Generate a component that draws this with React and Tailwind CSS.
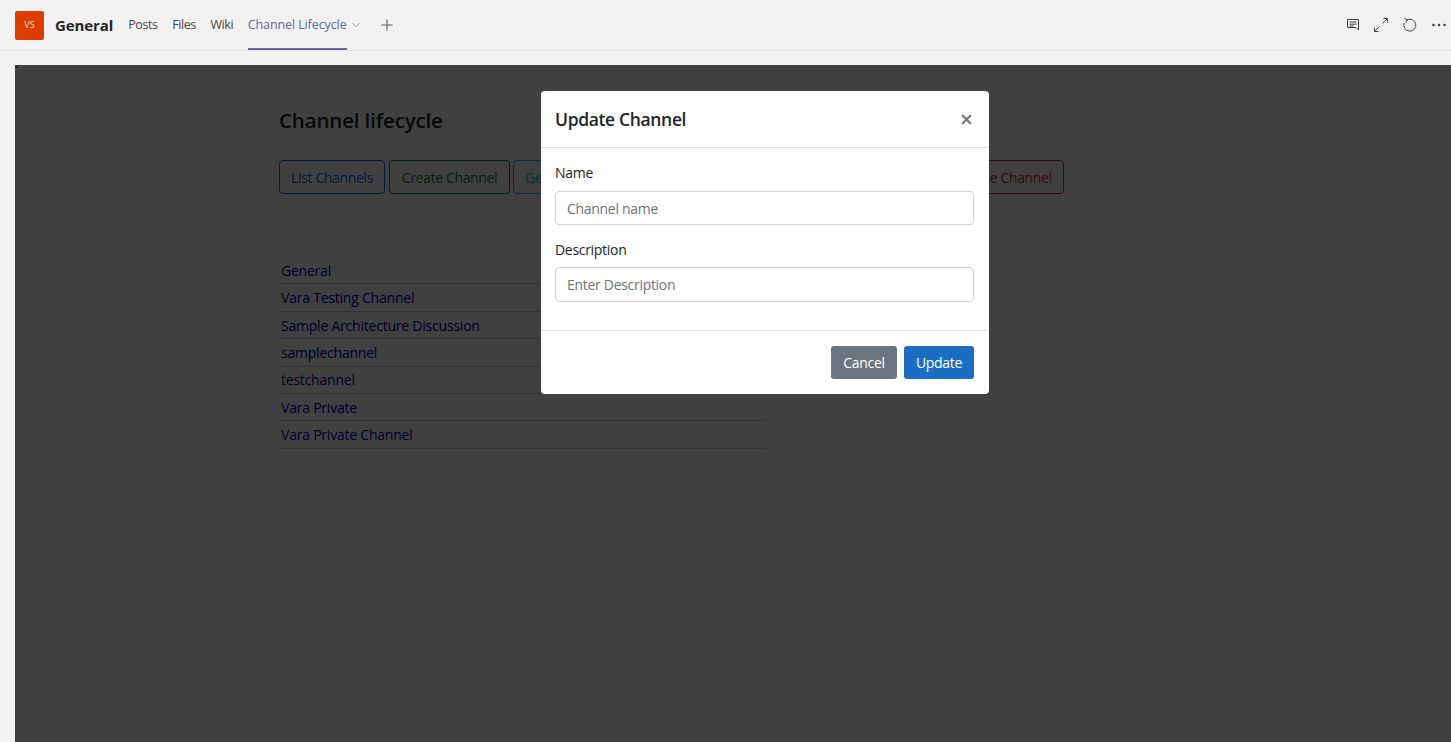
import { Plus, ChevronDown, X } from 'lucide-react'

const channels = [
  'General',
  'Vara Testing Channel',
  'Sample Architecture Discussion',
  'samplechannel',
  'testchannel',
  'Vara Private',
  'Vara Private Channel',
]

function TopIcons() {
  return (
    <div className="flex items-center gap-[11px] text-[#484644]">
      <svg width="18" height="18" viewBox="0 0 18 18" fill="none" stroke="currentColor" strokeWidth="1" className="ml-[1px]">
        <path d="M3.5 3.5h11v10.5l-2.5-2.5H3.5z" />
        <path d="M5.5 6h7M5.5 8.2h7M5.5 10h4" />
      </svg>
      <svg width="18" height="18" viewBox="0 0 18 18" fill="none" stroke="currentColor" strokeWidth="1" className="-ml-[1px]">
        <path d="M10.5 7.5l5-5M11.5 2.5h4v4M7.5 10.5l-5 5M2.5 11.5v4h4" />
      </svg>
      <svg width="18" height="18" viewBox="0 0 18 18" fill="none" stroke="currentColor" strokeWidth="1">
        <path d="M6 3.8A6 6 0 1 1 3.2 7" />
        <path d="M3.5 2.5l2.8 1.4-1.4 2.8" />
      </svg>
      <svg width="18" height="18" viewBox="0 0 18 18" fill="currentColor">
        <circle cx="3.5" cy="9" r="1.3" />
        <circle cx="9" cy="9" r="1.3" />
        <circle cx="14.5" cy="9" r="1.3" />
      </svg>
    </div>
  )
}

function OutlineButton({ color, children }) {
  return (
    <button className={`h-[34px] shrink-0 rounded-[4px] border px-[11px] text-[14px] ${color}`}>
      {children}
    </button>
  )
}

export default function App() {
  return (
    <div className="flex h-screen w-full flex-col overflow-hidden bg-[#f3f2f1] font-['Open_Sans',sans-serif] text-[#252423]">
      <header className="flex h-[51px] shrink-0 items-center border-b border-[#e6e4e2] pl-[15px] pr-[3px]">
        <div className="flex h-[29px] w-[29px] items-center justify-center rounded-[2px] bg-[#dc3e00] text-[9px] text-[#f8d8c8]">
          VS
        </div>
        <h1 className="ml-[11px] text-[15px] font-bold tracking-[-0.1px]">General</h1>
        <nav className="ml-[15px] flex h-full items-center gap-[14.5px] text-[12.5px] tracking-[-0.4px] text-[#484644]">
          <span>Posts</span>
          <span>Files</span>
          <span>Wiki</span>
          <span className="relative flex h-full items-center font-medium tracking-[-0.1px] text-[#6264a7]">
            Channel Lifecycle
            <span className="absolute bottom-0 left-0 right-0 h-[2px] bg-[#6264a7]" />
          </span>
        </nav>
        <ChevronDown size={14} strokeWidth={1} className="ml-[2px] text-[#7a7876]" />
        <Plus size={18} strokeWidth={1.4} className="ml-[15px] text-[#605e5c]" />
        <div className="ml-auto">
          <TopIcons />
        </div>
      </header>

      <main className="flex-1 pl-[15px] pt-[14px]">
        <div className="relative h-full bg-white">
          <div className="pl-[264px] pt-[39px] text-[#212529]">
            <h2 className="text-[20.5px] font-semibold leading-[32px] tracking-[-0.15px]">Channel lifecycle</h2>
            <div className="mt-[24px] flex gap-[4px] tracking-[-0.35px]">
              <OutlineButton color="border-[#0d6efd] text-[#0d6efd]">List Channels</OutlineButton>
              <OutlineButton color="w-[121px] border-[#198754] text-[#198754]">Create Channel</OutlineButton>
              <OutlineButton color="-ml-[1px] w-[428px] border-[#0dcaf0] text-left text-[#0dcaf0]">Get Channel</OutlineButton>
              <OutlineButton color="border-[#dc3545] text-[#dc3545]">Delete Channel</OutlineButton>
            </div>
            <table className="mt-[62.6px] w-[487px] text-[14px] tracking-[-0.22px]">
              <tbody>
                {channels.map(name => (
                  <tr key={name} className="h-[27.4px] border-b border-[#c8ccd0]">
                    <td className="px-[2px] align-middle text-[#0000c8]">{name}</td>
                  </tr>
                ))}
              </tbody>
            </table>
          </div>

          <div className="absolute inset-0 bg-black/[.75]">
            <span className="absolute left-0 top-0 text-[10px] leading-[12px] text-black">`</span>
          </div>

          <div className="absolute left-[526px] top-[26px] flex h-[303px] w-[448px] flex-col rounded-[4px] bg-white text-[#212529]">
            <div className="flex h-[57px] items-center justify-between border-b border-[#dee2e6] pl-[14px] pr-[15px]">
              <h3 className="text-[17.5px] font-semibold tracking-[-0.35px]">Update Channel</h3>
              <X size={15} strokeWidth={3.5} className="text-[#777]" />
            </div>
            <div className="flex-1 pl-[14px] pr-[15px] pt-[15px] text-[14px] tracking-[-0.3px]">
              <label className="block leading-[19px]">Name</label>
              <input
                placeholder="Channel name"
                className="mt-[9px] block h-[34px] w-full rounded-[4px] border border-[#ced4da] px-[11px] pt-[1px] text-[14px] placeholder:text-[#6c757d]"
              />
              <label className="mt-[15px] block leading-[19px]">Description</label>
              <input
                placeholder="Enter Description"
                className="mt-[8px] block h-[35px] w-full rounded-[4px] border border-[#ced4da] px-[11px] text-[14px] placeholder:text-[#6c757d]"
              />
            </div>
            <div className="flex h-[64px] items-start justify-end gap-[7px] border-t border-[#dee2e6] pr-[15px] pt-[15px] text-[14px] tracking-[-0.3px] text-white">
              <button className="h-[33px] w-[66px] rounded-[3px] bg-[#6c757d]">Cancel</button>
              <button className="h-[33px] w-[70px] rounded-[3px] bg-[#1b6ec2]">Update</button>
            </div>
          </div>
        </div>
      </main>
    </div>
  )
}
